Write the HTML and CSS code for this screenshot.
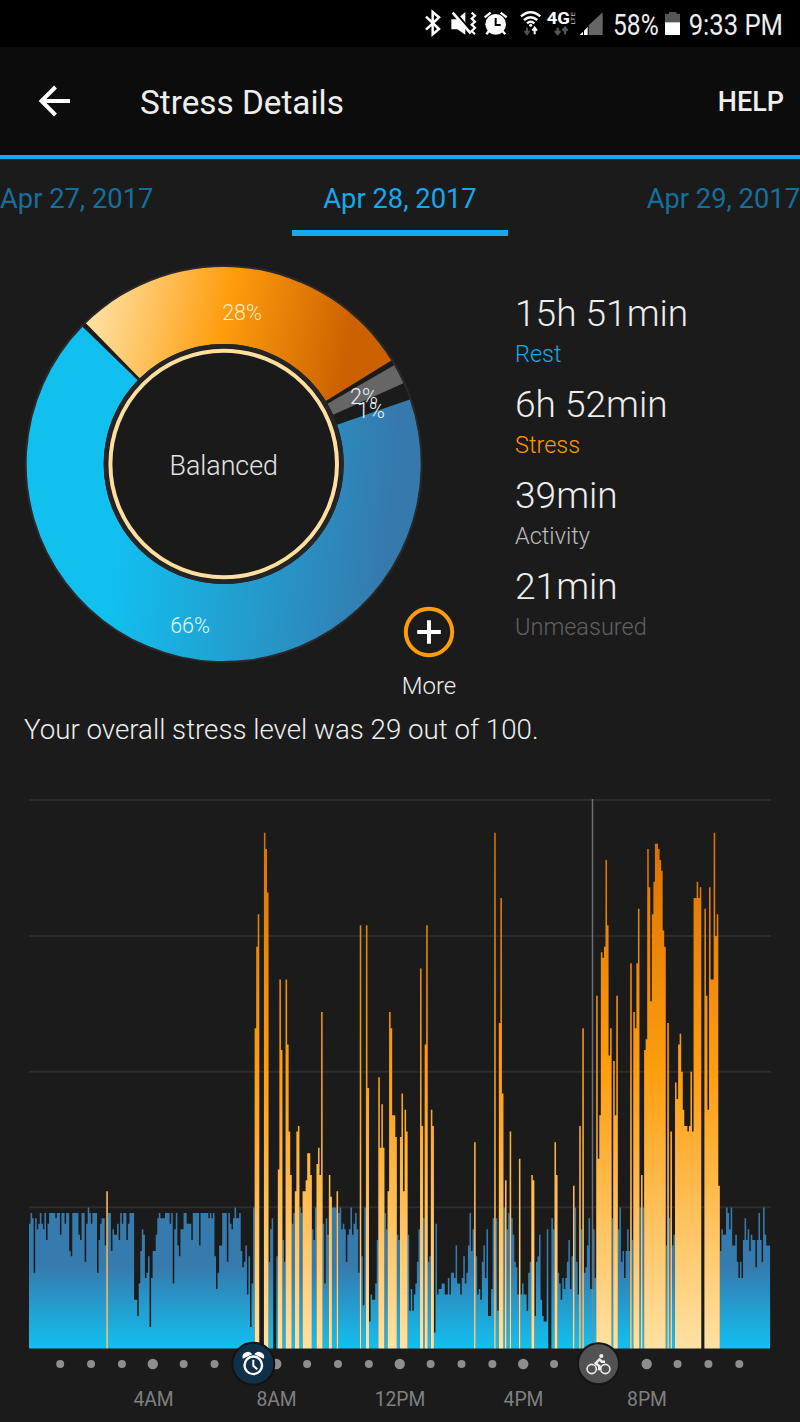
FILE: index.html
```html
<!DOCTYPE html>
<html lang="en">
  <head>
    <meta charset="UTF-8">
    <title>Stress Details</title>
    <link rel="stylesheet" href="styles.css">
  </head>
  <body>
    <div class="statusbar">
      <svg width="390" height="47" viewBox="0 0 1170 141">
        <!-- bluetooth -->
        <path d="M48 50 L87 87 L68 103 V36 L87 52 L48 89" fill="none" stroke="#fff" stroke-width="7.500"/>
        <!-- muted / vibrate -->
        <path d="M124 58 H140 L166 36 V104 L142 88 H124 Z" fill="#fff"/>
        <path d="M133 34 L186 96" stroke="#000" stroke-width="7"/>
        <path d="M128 38 L182 100" stroke="#fff" stroke-width="8"/>
        <path d="M185 38 L195 47 L185 56 L195 65 L185 74 L195 83 L185 93 L195 103" fill="none" stroke="#fff" stroke-width="6.500"/>
        <!-- alarm -->
        <circle cx="257" cy="73" r="31" fill="#fff"/>
        <path d="M224 52 L242 38 M290 52 L272 38 M236 94 L229 103 M278 94 L286 103" stroke="#fff" stroke-width="7"/>
        <path d="M257 54 V75 H272" fill="none" stroke="#000" stroke-width="6"/>
        <!-- wifi -->
        <g fill="none" stroke="#fff" stroke-width="7">
          <path d="M333 49 Q362 24 391 49"/>
          <path d="M342 60 Q362 43 382 60"/>
          <path d="M351 70 Q362 60 373 70"/>
        </g>
        <circle cx="362" cy="76" r="4.500" fill="#fff"/>
        <path d="M351 83 V96 M344 93 L351 102 L358 93" fill="none" stroke="#555" stroke-width="6"/>
        <path d="M374 103 V86 M367 92 L374 83 L381 92" fill="none" stroke="#fff" stroke-width="6"/>
        <!-- network -->
        <text class="net" x="410" y="72" textLength="70" lengthAdjust="spacingAndGlyphs">4G</text>
        <text class="lte" transform="translate(496 74) rotate(-90)" textLength="38" lengthAdjust="spacingAndGlyphs">LTE</text>
        <path d="M443 83 V98 M435 93 L443 102 L451 93 M465 103 V86 M457 92 L465 83 L473 92" fill="none" stroke="#555" stroke-width="7"/>
        <!-- signal -->
        <path d="M536 105 V76 L578 37 V105 Z" fill="#666"/>
        <path d="M509 105 L519 95 V105 Z M522 105 V92 L533 81 V105 Z" fill="#fff"/>
        <text class="status-text" x="609" y="104" textLength="137" lengthAdjust="spacingAndGlyphs">58%</text>
        <!-- battery -->
        <path d="M765 68 V41 H777 V36 H799 V41 H810 V68 Z" fill="#555"/>
        <rect x="765" y="67" width="45" height="38" fill="#fff"/>
        <text class="status-text" x="836" y="104" textLength="283" lengthAdjust="spacingAndGlyphs">9:33 PM</text>
      </svg>
    </div>

    <div class="header">
      <svg class="back" width="34" height="34" viewBox="0 0 34 34">
        <path d="M33 17 H4 M18.500 3 L4.500 17 L18.500 31" fill="none" stroke="#fff" stroke-width="4"/>
      </svg>
      <h1>Stress Details</h1>
      <span class="help">HELP</span>
    </div>

    <div class="tabs">
      <span class="tab">Apr 27, 2017</span>
      <span class="tab active">Apr 28, 2017</span>
      <span class="tab">Apr 29, 2017</span>
    </div>

    <div class="overview">
      <svg class="donut" width="400" height="400" viewBox="24 264 400 400">
        <defs>
          <linearGradient id="stress" gradientUnits="userSpaceOnUse" x1="92" y1="325" x2="344" y2="373">
            <stop offset="0" stop-color="#ffdf9e"/>
            <stop offset="0.500" stop-color="#ff9d0d"/>
            <stop offset="1" stop-color="#cb6100"/>
          </linearGradient>
          <linearGradient id="rest" gradientUnits="userSpaceOnUse" x1="122" y1="464" x2="394" y2="490">
            <stop offset="0" stop-color="#11c0ef"/>
            <stop offset="1" stop-color="#3579ad"/>
          </linearGradient>
        </defs>
        <circle cx="223.700" cy="464" r="198" fill="#1b1b1b" stroke="#292929" stroke-width="2"/>
        <path fill="url(#stress)" d="M85.900 323.200 A197 197 0 0 1 391.300 360.500 L325.800 400.900 A120 120 0 0 0 139.700 378.300 Z"/>
        <path fill="#666" d="M394.100 365.200 A197 197 0 0 1 403.400 383.300 L333.200 414.800 A120 120 0 0 0 327.500 403.800 Z"/>
        <path fill="url(#rest)" d="M409.800 399.500 A197 197 0 1 1 82.500 326.700 L137.700 380.300 A120 120 0 1 0 337.100 424.700 Z"/>
        <circle cx="223.700" cy="464" r="118" fill="#1a1a1a" stroke="#252525" stroke-width="4"/>
        <circle cx="223.700" cy="464" r="113.300" fill="none" stroke="#ffdf9f" stroke-width="4"/>
        <text class="pct cream" x="242" y="320">28%</text>
        <text class="pct" x="364" y="403.500">2%</text>
        <text class="pct" x="371" y="418">1%</text>
        <text class="pct" x="190" y="632.500">66%</text>
        <text class="state" x="223.700" y="475">Balanced</text>
      </svg>
      <div class="more">
        <svg width="52" height="52" viewBox="0 0 52 52">
          <circle cx="26" cy="26" r="23.200" fill="none" stroke="#ff9c0a" stroke-width="4"/>
          <path d="M26 14.200 V37.800 M14.200 26 H37.800" stroke="#fff" stroke-width="4"/>
        </svg>
        <span>More</span>
      </div>
      <dl class="totals">
        <dt>15h 51min</dt>
        <dd class="rest">Rest</dd>
        <dt>6h 52min</dt>
        <dd class="stress">Stress</dd>
        <dt>39min</dt>
        <dd class="activity">Activity</dd>
        <dt>21min</dt>
        <dd class="unmeasured">Unmeasured</dd>
      </dl>
    </div>

    <p class="summary">Your overall stress level was 29 out of 100.</p>

    <svg class="chart" width="800" height="632" viewBox="0 790 800 632">
      <defs>
        <linearGradient id="high" gradientUnits="userSpaceOnUse" x1="0" y1="800" x2="0" y2="1348">
          <stop offset="0" stop-color="#d66a00"/>
          <stop offset="0.500" stop-color="#ff9e0e"/>
          <stop offset="1" stop-color="#ffe1a3"/>
        </linearGradient>
        <linearGradient id="low" gradientUnits="userSpaceOnUse" x1="0" y1="1268" x2="0" y2="1348">
          <stop offset="0" stop-color="#367bae"/>
          <stop offset="1" stop-color="#11c0f0"/>
        </linearGradient>
      </defs>
      <path class="grid" d="M29 800 H771 M29 936 H771 M29 1071.700 H771 M29 1207.300 H771"/>
      <path id="low-bars" fill="url(#low)"/>
      <path id="high-bars" fill="url(#high)"/>
      <path d="M592.500 799 V1348" stroke="#8a8a8a" stroke-opacity="0.750" stroke-width="1.500"/>
      <g id="dots"></g>
      <text class="hour" x="153.500" y="1405.500">4AM</text>
      <text class="hour" x="276.500" y="1405.500">8AM</text>
      <text class="hour" x="400" y="1405.500">12PM</text>
      <text class="hour" x="523.500" y="1405.500">4PM</text>
      <text class="hour" x="647" y="1405.500">8PM</text>
      <!-- wake up -->
      <g transform="translate(253.300 1363.800)">
        <circle r="21" fill="#10304a" stroke="#121212" stroke-width="2"/>
        <circle cy="1.500" r="8.800" fill="none" stroke="#fff" stroke-width="2.400"/>
        <path d="M0 -4 V2 L4 5.500" fill="none" stroke="#fff" stroke-width="2"/>
        <path d="M-10.500 -5 A5.300 5.300 0 0 1 -1 -9.500 Z M10.500 -5 A5.300 5.300 0 0 0 1 -9.500 Z" fill="#fff"/>
      </g>
      <!-- cycling -->
      <g transform="translate(598.500 1363.800)">
        <circle r="20.500" fill="#525252" stroke="#151515" stroke-width="2"/>
        <g fill="none" stroke="#eee">
          <circle cx="-6.800" cy="5.200" r="4.600" stroke-width="1.600"/>
          <circle cx="6.800" cy="5.200" r="4.600" stroke-width="1.600"/>
          <path d="M0.500 6.500 L1 2.500 L-3 -0.500 L1 -4.500 L3.500 -2 H6.500" stroke-width="2.600" stroke-linejoin="round"/>
        </g>
        <circle cx="2.800" cy="-7.800" r="2.100" fill="#eee"/>
      </g>
    </svg>
    <script src="chart.js"></script>
  </body>
</html>
```
FILE: styles.css
```css
body {
  margin: 0;
  width: 800px;
  height: 1422px;
  overflow: hidden;
  background-color: #1b1b1b;
  color: #eee;
  font-family: Roboto, sans-serif;
}

svg {
  display: block;
}

.statusbar {
  display: flex;
  justify-content: flex-end;
  height: 47px;
  background: #000;
}
.status-text {
  font-size: 86px;
  fill: #eee;
}
.net {
  font-size: 50px;
  font-weight: bold;
  fill: #fff;
}
.lte {
  font-size: 18px;
  fill: #ccc;
}

.header {
  display: flex;
  align-items: center;
  box-sizing: border-box;
  height: 112px;
  padding: 0 16px 0 37px;
  border-bottom: 4px solid #14a8ef;
  background: #0c0c0c;
}
.header h1 {
  flex-grow: 1;
  margin: 4px 0 0 69px;
  font-size: 33.3px;
  font-weight: normal;
  line-height: 40px;
}
.help {
  margin-top: 1px;
  font-size: 27px;
  font-weight: 500;
}

.tabs {
  display: flex;
  justify-content: space-between;
  height: 77px;
}
.tab {
  box-sizing: border-box;
  padding-top: 23px;
  font-size: 27.3px;
  line-height: 34px;
  color: #14709b;
}
.tab.active {
  width: 216px;
  border-bottom: 6px solid #14a8ef;
  color: #14a8ef;
  text-align: center;
}

.overview {
  display: flex;
  height: 464px;
  padding-left: 24px;
}
.donut {
  margin-top: 28px;
}
.pct {
  font-size: 21.5px;
  font-weight: 300;
  fill: #e6f6fb;
  text-anchor: middle;
}
.pct.cream {
  fill: #ffeecb;
}
.state {
  font-size: 26.8px;
  font-weight: 300;
  fill: #e4e4e4;
  text-anchor: middle;
}
.more {
  display: flex;
  flex-direction: column;
  align-items: center;
  align-self: flex-end;
  width: 60px;
  margin: 0 0 -1px -25px;
  font-size: 24px;
  font-weight: 300;
  line-height: 30px;
}
.more span {
  margin-top: 13px;
}

.totals {
  margin: 54px 0 0 56px;
  font-weight: 300;
}
.totals dt {
  font-size: 37.1px;
  line-height: 47px;
}
.totals dd {
  margin: 0 0 13px;
  padding-top: 3px;
  font-size: 23.5px;
  line-height: 28px;
}
.rest {
  color: #14a8ef;
}
.stress {
  color: #ff9800;
}
.activity {
  color: #bbb;
}
.unmeasured {
  color: #606060;
}

.summary {
  height: 90px;
  margin: 0 0 0 24px;
  font-size: 27.7px;
  font-weight: 300;
  line-height: 59px;
}

.grid {
  fill: none;
  stroke: #2d2d2d;
  stroke-width: 2px;
}
.hour {
  font-size: 19.3px;
  fill: #808080;
  text-anchor: middle;
}
```
FILE: chart.js
```js
'use strict';
// One sample every 3 minutes, 480 in a day. Each entry is "sample:level" and
// holds until the next one; x means nothing was measured.
const SAMPLES = `
0:22 1:24 2:23 3:13 4:23 5:21 6:22 7:24 8:22 9:21 10:24 11:19 12:22 13:24 17:23 18:24 20:20 21:24
23:22 24:24 26:17 27:16 28:24 32:20 33:19 34:24 36:15 37:22 38:25 39:24 40:22 41:24 44:13 45:19
46:22 47:23 49:18 50:28 51:24 53:17 54:21 55:20 57:22 58:19 59:24 60:22 61:24 63:19 64:22 65:24
68:8 70:5 71:11 72:17 73:21 74:20 75:12 76:13 77:16 78:3 79:12 80:17 82:20 83:23 84:24 85:23
88:24 91:22 92:24 93:11 94:21 95:24 96:18 97:16 98:21 100:24 102:22 105:19 106:24 110:18 111:24
116:23 117:24 118:23 119:24 120:16 121:10 122:13 123:18 125:24 128:15 129:24 130:22 131:21
132:23 133:25 134:23 136:24 137:17 138:14 139:15 140:18 141:9 142:16 143:3 144:11 145:25
146:58 147:73 148:79 149:x 152:94 153:91 154:83 155:15 156:21 157:23 158:x 160:16 161:32 162:67
163:54 164:19 165:15 166:67 167:55 168:39 169:31 170:22 171:24 172:28 173:39 174:40 175:25
176:24 177:28 179:30 180:35 182:31 183:21 184:19 185:25 186:33 187:36 188:31 189:61 190:22
191:11 192:23 193:20 194:31 195:27 196:25 199:28 200:24 201:25 202:21 203:22 204:21 205:15
206:20 207:21 208:25 209:20 210:22 211:24 212:21 213:13 214:77 215:16 216:7 217:25 218:77
219:47 220:4 221:9 222:8 224:11 225:19 226:49 227:36 228:44 229:36 230:24 231:21 232:28 233:61
234:58 235:42 237:38 238:20 239:19 240:38 241:46 242:28 243:43 244:39 245:20 246:6 247:10
248:6 249:9 250:11 251:15 252:21 253:69 254:40 255:23 256:55 257:77 258:15 259:16 260:43
261:40 262:2 263:22 264:9 265:10 267:11 269:9 271:12 272:9 273:13 275:12 276:18 277:11 279:9
280:12 281:16 282:11 283:13 284:18 285:24 286:17 287:21 288:37 289:16 290:9 291:10 292:8
293:15 294:18 295:12 296:21 297:5 299:10 300:23 301:94 302:23 303:6 304:59 305:82 306:46
307:25 308:30 309:21 310:24 311:39 312:23 313:20 314:15 315:14 316:9 317:34 318:9 319:11
320:9 322:6 323:13 324:15 325:31 326:30 327:5 328:15 329:16 330:20 331:8 332:5 333:4 335:21
336:x 338:23 339:21 340:37 341:31 342:13 343:11 344:8 345:12 346:10 347:12 348:15 349:19
350:10 351:16 352:29 353:25 354:15 355:9 356:40 357:21 358:58 359:13 360:14 361:18 362:23
363:10 365:21 366:12 367:64 368:34 369:42 370:72 371:71 372:73 373:89 374:77 375:53 376:58
377:23 378:52 379:42 380:64 381:21 382:25 383:15 384:17 385:12 386:17 387:21 388:17 389:70
390:19 391:61 392:58 393:70 394:80 395:25 396:31 397:25 398:54 399:56 400:91 401:84 402:63
403:79 404:85 405:92 407:91 408:89 409:87 410:76 411:73 412:18 413:59 414:23 415:39 416:18
417:20 418:48 419:45 420:55 421:57 422:50 423:43 424:40 426:39 427:40 428:50 429:39 430:82
432:85 433:82 434:84 435:x 437:80 438:64 439:43 440:84 441:67 443:94 444:75 445:79 446:29
447:17 448:21 449:20 451:25 452:24 453:21 454:25 455:18 457:20 458:15 459:12 460:15 461:12
462:19 463:23 464:19 465:21 466:17 467:20 468:19 470:14 471:19 472:24 473:19 474:15 475:25
476:20 477:18`;

const LEFT = 29;
const STEP = 1.5455;
const BASE = 1348.5;
const THRESHOLD = 25;

const x = (i) => (LEFT + Math.min(i, 479.5) * STEP).toFixed(2);
const y = (level) => (1207.5 - (level - THRESHOLD) * 5.43).toFixed(2);

const runs = SAMPLES.trim().split(/\s+/).map((s) => s.split(':'));

function outline(inSeries) {
  let d = '';
  let open = false;
  runs.forEach(([start, level], i) => {
    const end = i + 1 < runs.length ? runs[i + 1][0] : 480;
    if (level !== 'x' && inSeries(+level)) {
      if (!open)
        d += `M${x(start)} ${BASE}`;
      d += `V${y(level)}H${x(end)}`;
      open = true;
    } else if (open) {
      d += `V${BASE}Z`;
      open = false;
    }
  });
  return open ? d + `V${BASE}Z` : d;
}

document.querySelector('#low-bars').setAttribute('d', outline((v) => v <= THRESHOLD));
document.querySelector('#high-bars').setAttribute('d', outline((v) => v > THRESHOLD));

// a dot for every hour, larger ones over the labels
const dots = document.querySelector('#dots');
for (let hour = 1; hour <= 23; hour++) {
  if (hour === 18)
    continue;
  const dot = document.createElementNS('http://www.w3.org/2000/svg', 'circle');
  dot.setAttribute('cx', 29.3 + hour * 30.87);
  dot.setAttribute('cy', 1364);
  dot.setAttribute('r', hour % 4 ? 4 : 5.2);
  dot.setAttribute('fill', '#8e8e8e');
  dots.appendChild(dot);
}
```
